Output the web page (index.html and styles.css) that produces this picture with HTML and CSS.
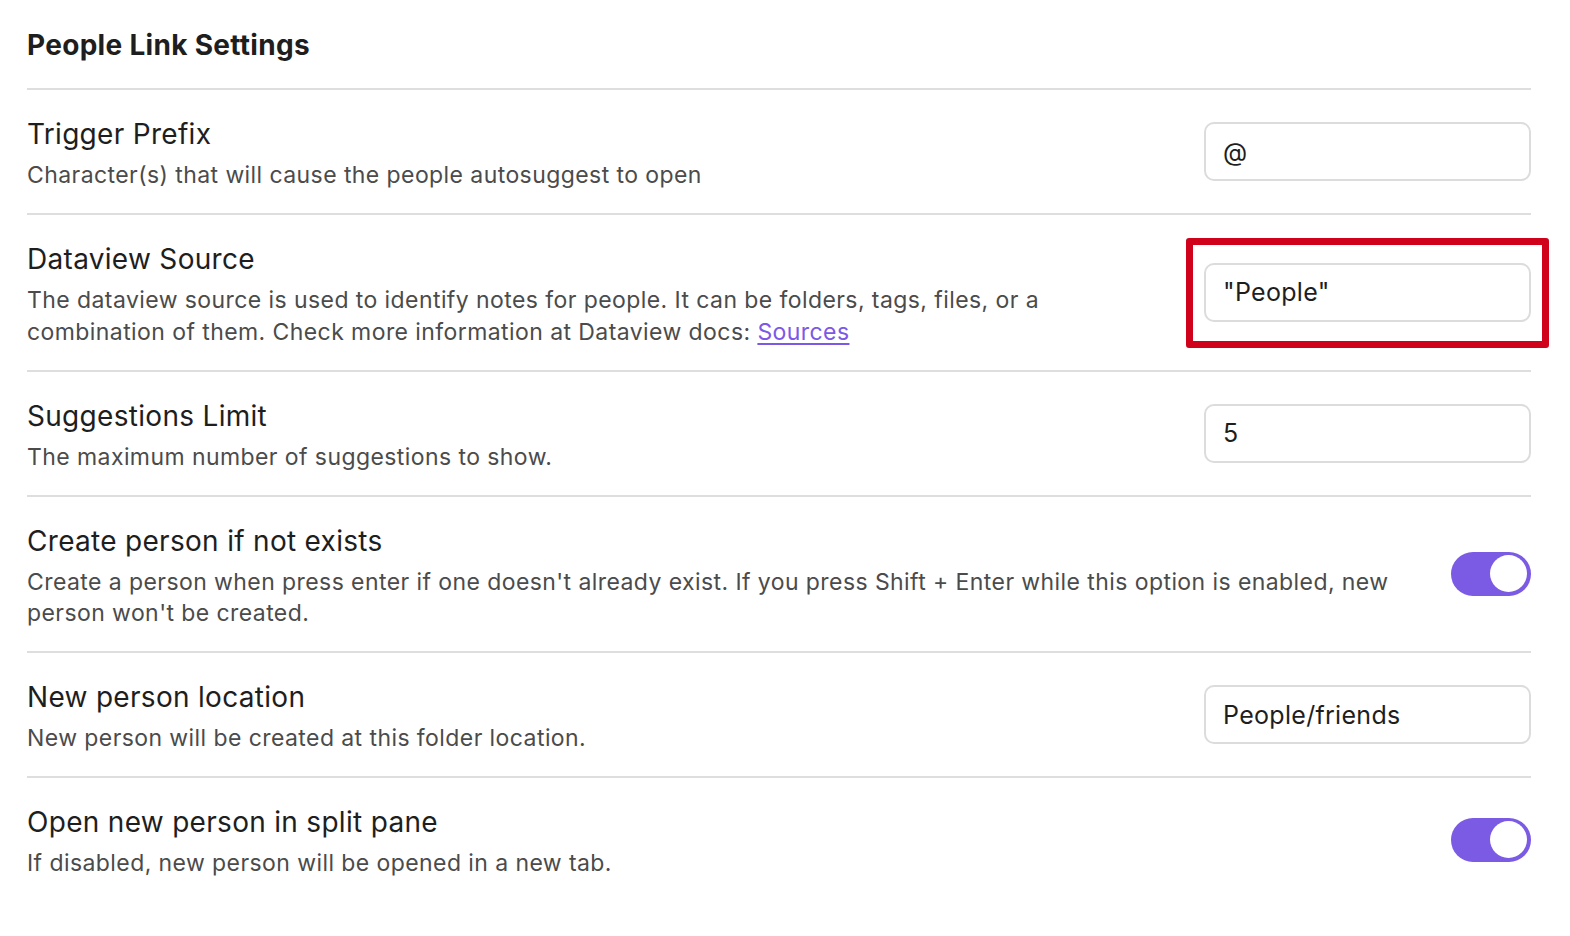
FILE: index.html
```html
<!DOCTYPE html>
<html>
<head>
<meta charset="utf-8">
<link rel="stylesheet" href="styles.css">
</head>
<body>
<div class="settings">
  <h2 class="title">People Link Settings</h2>

  <div class="setting-item">
    <div class="info">
      <div class="name">Trigger Prefix</div>
      <div class="desc">Character(s) that will cause the people autosuggest to open</div>
    </div>
    <div class="control"><div class="text-input">@</div></div>
  </div>

  <div class="setting-item">
    <div class="info">
      <div class="name">Dataview Source</div>
      <div class="desc">The dataview source is used to identify notes for people. It can be folders, tags, files, or a combination of them. Check more information at Dataview docs: <a class="link" href="#">Sources</a></div>
    </div>
    <div class="control highlighted"><div class="text-input">"People"</div><div class="annotation"></div></div>
  </div>

  <div class="setting-item">
    <div class="info">
      <div class="name">Suggestions Limit</div>
      <div class="desc">The maximum number of suggestions to show.</div>
    </div>
    <div class="control"><div class="text-input">5</div></div>
  </div>

  <div class="setting-item">
    <div class="info">
      <div class="name">Create person if not exists</div>
      <div class="desc">Create a person when press enter if one doesn't already exist. If you press Shift + Enter while this option is enabled, new person won't be created.</div>
    </div>
    <div class="control"><div class="toggle"><div class="knob"></div></div></div>
  </div>

  <div class="setting-item">
    <div class="info">
      <div class="name">New person location</div>
      <div class="desc">New person will be created at this folder location.</div>
    </div>
    <div class="control"><div class="text-input">People/friends</div></div>
  </div>

  <div class="setting-item">
    <div class="info">
      <div class="name">Open new person in split pane</div>
      <div class="desc">If disabled, new person will be opened in a new tab.</div>
    </div>
    <div class="control"><div class="toggle"><div class="knob"></div></div></div>
  </div>
</div>
</body>
</html>
```

FILE: styles.css
```css
html, body {
  margin: 0;
  padding: 0;
  background: #ffffff;
}

body {
  font-family: Inter, "Noto Sans", "Liberation Sans", sans-serif;
  color: #1e1e1e;
}

.settings {
  padding: 0 39px 0 27px;
}

.title {
  font-size: 28px;
  font-weight: 700;
  line-height: 36px;
  letter-spacing: 0.3px;
  margin: 27px 0 25px;
  color: #1e1e1e;
}

.setting-item {
  display: flex;
  align-items: center;
  border-top: 2px solid #dedede;
  padding: 26px 0 21.5px;
}

.info {
  flex: 1 1 auto;
  margin-right: 40px;
}

.name {
  font-size: 28px;
  line-height: 36px;
  letter-spacing: 0.3px;
  color: #1e1e1e;
}

.desc {
  font-size: 23px;
  line-height: 31.5px;
  letter-spacing: 0.42px;
  color: #4b4b4b;
  margin-top: 8px;
}

.link {
  color: #7b58e6;
  text-decoration: underline;
  text-underline-offset: 3px;
}

.control {
  flex: 0 0 auto;
  display: flex;
  justify-content: flex-end;
  position: relative;
  margin-top: -4.5px;
}

.text-input {
  box-sizing: border-box;
  width: 327px;
  height: 59px;
  border: 2px solid #dcdcdc;
  border-radius: 10px;
  padding: 0 17px;
  display: flex;
  align-items: center;
  font-size: 25px;
  letter-spacing: 0.3px;
  color: #1e1e1e;
  background: #fff;
}

.annotation {
  position: absolute;
  top: -25px;
  bottom: -26px;
  left: -18px;
  right: -18px;
  border: 7px solid #d0021b;
  border-radius: 3px;
  pointer-events: none;
}

.toggle {
  box-sizing: border-box;
  width: 80px;
  height: 44px;
  border-radius: 22px;
  background: #7b5ae4;
  padding: 4px;
  display: flex;
  justify-content: flex-end;
  align-items: center;
}

.knob {
  width: 37px;
  height: 37px;
  border-radius: 50%;
  background: #ffffff;
}
```
